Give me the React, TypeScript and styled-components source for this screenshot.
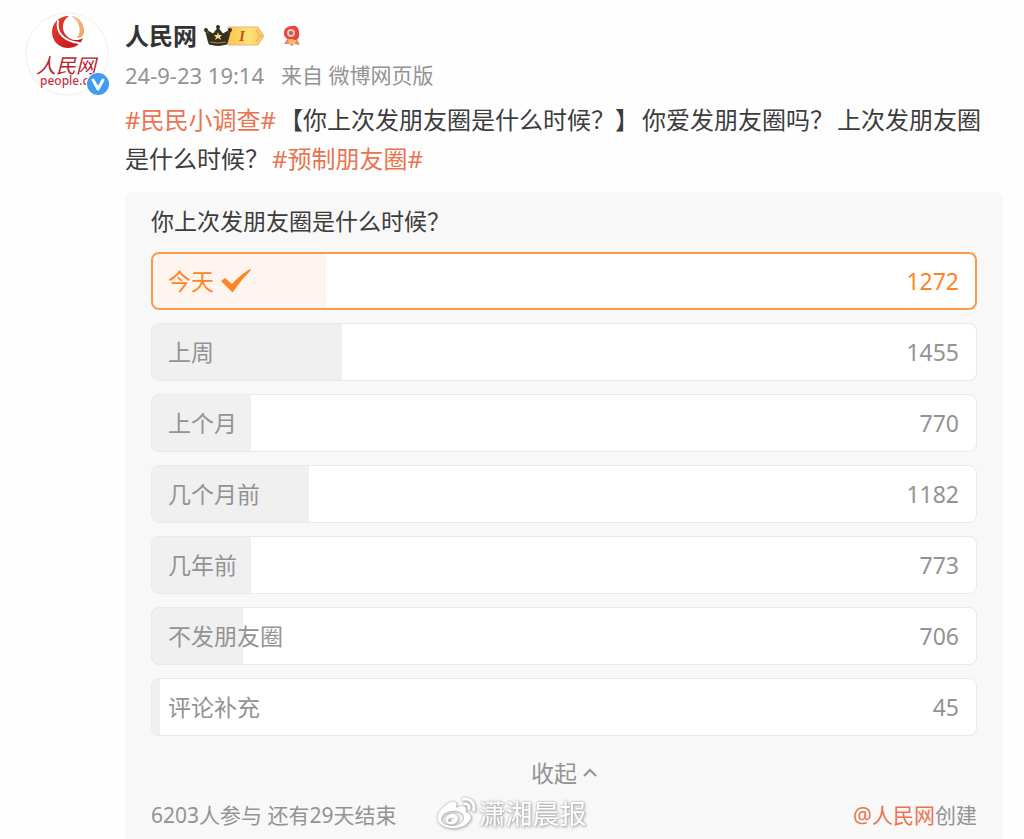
import React from 'react';
import styled, { createGlobalStyle } from 'styled-components';
import { FaWeibo } from 'react-icons/fa';

const GlobalStyle = createGlobalStyle`
  * { box-sizing: border-box; }
  body { margin: 0; background: #fefefe; }
  body, button { font-family: 'Noto Sans', 'Noto Sans CJK SC', sans-serif; }
`;

const Post = styled.article`
  position: relative;
  display: grid;
  grid-template-columns: 84px minmax(0, 1fr);
  column-gap: 16px;
  padding: 12px 21px 0 25px;
  overflow: hidden;
`;

const AvatarLink = styled.a`
  display: block;
  height: 84px;
`;

const Body = styled.div`
  min-width: 0;
`;

const NameRow = styled.div`
  display: flex;
  align-items: center;
  height: 40px;
  margin-top: 4px;
`;

const Name = styled.a`
  color: #333;
  font-size: 24px;
  font-weight: 700;
  line-height: 38px;
  text-decoration: none;
`;

const VipBadge = styled.svg`
  margin-left: 7px;
`;

const MedalBadge = styled.svg`
  margin-left: 17px;
`;

const Meta = styled.div`
  display: flex;
  gap: 17px;
  color: #939393;
  font-size: 21px;
  line-height: 38px;
`;

const Time = styled.time`
  font-size: 22px;
`;

const Content = styled.p`
  margin: 6px 0 14px;
  color: #3c3c3c;
  font-size: 24px;
  line-height: 39px;
`;

const Phrase = styled.span`
  margin-right: 3px;
`;

const Topic = styled.a`
  margin-right: 3px;
  color: #eb7350;
  text-decoration: none;
`;

const Poll = styled.section`
  padding: 12px 26px 7px;
  border-radius: 8px 8px 0 0;
  background: #f8f8f8;
`;

const Question = styled.h2`
  margin: 0 0 14px;
  color: #3c3c3c;
  font-size: 23px;
  font-weight: 400;
  line-height: 34px;
`;

const Options = styled.div`
  display: flex;
  flex-direction: column;
  gap: 13px;
`;

const Option = styled.button<{ $share: number; $picked?: boolean }>`
  display: flex;
  align-items: center;
  justify-content: space-between;
  width: 100%;
  height: 58px;
  padding: ${p => (p.$picked ? '0 16px 0 15px' : '0 17px 0 16px')};
  border: ${p => (p.$picked ? '2px solid #f99a4c' : '1px solid #e9e9e9')};
  border-radius: 8px;
  background: linear-gradient(
    to right,
    ${p => (p.$picked ? '#fff5f0' : '#f0f0f0')} ${p => p.$share}%,
    #fff ${p => p.$share}%
  );
  color: ${p => (p.$picked ? '#ff8524' : '#939393')};
  font-size: 23px;
  line-height: 34px;
`;

const OptionLabel = styled.span`
  display: flex;
  align-items: center;
  gap: 7px;
`;

const Collapse = styled.button`
  display: flex;
  align-items: center;
  gap: 6px;
  height: 34px;
  margin: 20px auto 8px;
  padding: 0;
  border: 0;
  background: none;
  color: #939393;
  font-size: 23px;
  line-height: 34px;
`;

const Footer = styled.footer`
  display: flex;
  justify-content: space-between;
  color: #939393;
  font-size: 21px;
  line-height: 34px;
`;

const Mention = styled.a`
  color: #eb7350;
  text-decoration: none;
`;

const Watermark = styled.div`
  position: absolute;
  left: 50%;
  bottom: 6px;
  display: flex;
  align-items: center;
  gap: 3px;
  color: #fff;
  font-size: 27px;
  line-height: 36px;
  transform: translateX(-50%);
  filter: drop-shadow(0 0 1px #aaa) drop-shadow(1px 1px 1px #bbb);
  pointer-events: none;
`;

const options = [
  { label: '今天', votes: 1272, share: 21, picked: true },
  { label: '上周', votes: 1455, share: 23 },
  { label: '上个月', votes: 770, share: 12 },
  { label: '几个月前', votes: 1182, share: 19 },
  { label: '几年前', votes: 773, share: 12 },
  { label: '不发朋友圈', votes: 706, share: 11 },
  { label: '评论补充', votes: 45, share: 1 },
];

const Avatar = () => (
  <svg width="84" height="84" viewBox="0 0 84 84" role="img" aria-label="人民网">
    <defs>
      <linearGradient id="gold" x1="0" y1="0" x2="1" y2="1">
        <stop offset="0" stopColor="#f6c98c" />
        <stop offset="1" stopColor="#e8a066" />
      </linearGradient>
      <linearGradient id="crimson" x1="0" y1="0" x2="1" y2="1">
        <stop offset="0" stopColor="#e5402c" />
        <stop offset="1" stopColor="#c1121c" />
      </linearGradient>
    </defs>
    <circle cx="42" cy="42" r="41" fill="#fff" stroke="#efefef" />
    <path d="M44 4C33 4 27 12 27 20C27 30 35 36 43 36C50 36 56 32 58 26C52 30 44 28 40 22C36 15 38 8 44 4Z" fill="url(#crimson)" />
    <path d="M33 9C31 20 38 29 54 31" fill="none" stroke="#fff" strokeWidth="2" strokeLinecap="round" />
    <path d="M46 4C54 4 60 12 59 21C58 24 56 26 52 26C57 20 55 9 46 4Z" fill="url(#gold)" />
    <text x="11" y="61" fill="#b8232d" fontSize="20" fontStyle="italic" fontFamily="'Noto Sans CJK SC', sans-serif">人民网</text>
    <text x="15" y="73" fill="#c5333c" fontSize="12" fontWeight="500" fontFamily="'Noto Sans', sans-serif">people.cn</text>
    <circle cx="73" cy="72" r="12" fill="#fff" />
    <circle cx="73" cy="72" r="11" fill="#419bf0" />
    <path d="M68 68L73 77L78 68" fill="none" stroke="#fff" strokeWidth="3" strokeLinecap="round" strokeLinejoin="round" />
  </svg>
);

const Vip = () => (
  <VipBadge width="62" height="24" viewBox="0 0 62 24" role="img" aria-label="VIP I">
    <defs>
      <linearGradient id="vip" x1="0" y1="0" x2="1" y2="0">
        <stop offset="0" stopColor="#f9c64a" />
        <stop offset="0.6" stopColor="#fbe37a" />
        <stop offset="1" stopColor="#f9c55a" />
      </linearGradient>
    </defs>
    <path d="M24 3H54L60 12L54 21H24Z" fill="url(#vip)" stroke="#f2b183" />
    <path d="M52 6L56 12L52 18" fill="none" stroke="#eda45c" />
    <path d="M4 7L9 10L14 4L19 10L24 7L23 20Q14 23 5 20Z" fill="#38301f" stroke="#38301f" strokeLinejoin="round" />
    <circle cx="2" cy="6" r="2" fill="#38301f" />
    <circle cx="14" cy="3" r="2" fill="#38301f" />
    <circle cx="26" cy="6" r="2" fill="#38301f" />
    <path d="M2 6L5 18M26 6L23 18" stroke="#38301f" strokeWidth="2" />
    <path d="M6 18Q14 20 22 18" fill="none" stroke="#a58a52" />
    <path d="M14 8L15 11L18 11L16 13L17 16L14 14L11 16L12 13L10 11L13 11Z" fill="#f8d98a" />
    <text x="38" y="17" textAnchor="middle" fill="#c04a1d" fontSize="14" fontStyle="italic" fontWeight="700" fontFamily="'Liberation Serif', serif">I</text>
  </VipBadge>
);

const Medal = () => (
  <MedalBadge width="18" height="22" viewBox="0 0 18 22" aria-hidden="true">
    <path d="M5 13L1 19L6 19L9 21L11 19L17 20L13 12Z" fill="#e5837a" />
    <path d="M5 13L6 19L12 19L14 12Z" fill="#f5bf62" />
    <path d="M9 1C13 0 16 3 16 7C17 12 15 15 12 15L9 14C4 15 1 12 1 8C1 4 4 1 9 1Z" fill="#e8443b" />
    <circle cx="8" cy="8" r="4" fill="#f0c3b4" />
    <circle cx="8" cy="8" r="2" fill="#a7645c" />
  </MedalBadge>
);

const Tick = () => (
  <svg width="30" height="24" viewBox="0 0 30 24" aria-hidden="true">
    <path d="M0 12L4 9L11 15Q19 6 29 0L30 1Q20 11 12 23H11Z" fill="#ff8524" />
  </svg>
);

export default function App() {
  return (
    <>
      <GlobalStyle />
      <Post>
        <AvatarLink href="#people"><Avatar /></AvatarLink>
        <Body>
          <NameRow>
            <Name href="#people">人民网</Name>
            <Vip />
            <Medal />
          </NameRow>
          <Meta>
            <Time>24-9-23 19:14</Time>
            <span>来自 微博网页版</span>
          </Meta>
          <Content>
            <Topic href="#survey">#民民小调查#</Topic>
            <Phrase>【你上次发朋友圈是什么时候？】</Phrase>
            <Phrase>你爱发朋友圈吗？</Phrase>
            <Phrase>上次发朋友圈是什么时候？</Phrase>
            <Topic href="#moments">#预制朋友圈#</Topic>
          </Content>
          <Poll>
            <Question>你上次发朋友圈是什么时候？</Question>
            <Options>
              {options.map(o => (
                <Option key={o.label} type="button" $share={o.share} $picked={o.picked} aria-pressed={!!o.picked}>
                  <OptionLabel>
                    {o.label}
                    {o.picked && <Tick />}
                  </OptionLabel>
                  <span>{o.votes}</span>
                </Option>
              ))}
            </Options>
            <Collapse type="button">
              收起
              <svg width="14" height="10" viewBox="0 0 14 10" aria-hidden="true">
                <path d="M1 8L7 2L13 8" fill="none" stroke="#939393" strokeWidth="2" />
              </svg>
            </Collapse>
            <Footer>
              <span>6203人参与 还有29天结束</span>
              <span><Mention href="#people">@人民网</Mention>创建</span>
            </Footer>
          </Poll>
        </Body>
        <Watermark>
          <FaWeibo size={38} aria-hidden="true" />
          潇湘晨报
        </Watermark>
      </Post>
    </>
  );
}
